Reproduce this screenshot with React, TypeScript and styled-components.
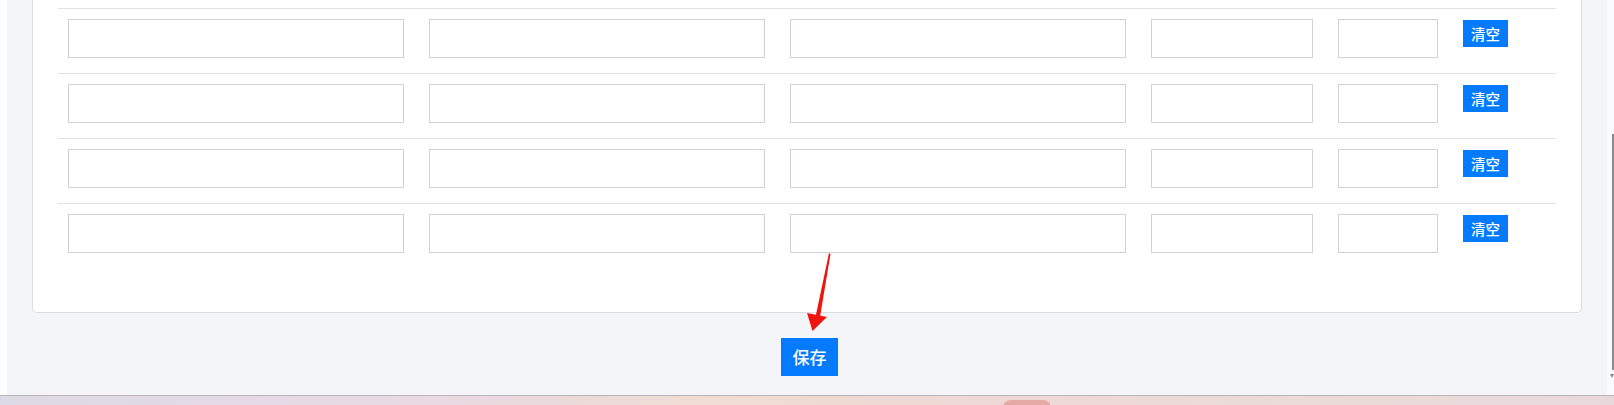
import React from "react";
import styled, { createGlobalStyle } from "styled-components";

const Global = createGlobalStyle`
  html, body { margin: 0; padding: 0; }
  body {
    width: 1614px;
    height: 405px;
    overflow: hidden;
    background: #fcfcfd;
    font-family: "Noto Sans CJK SC", "Noto Sans", sans-serif;
  }
`;

const Screen = styled.div`
  position: relative;
  width: 1614px;
  height: 405px;
  display: flex;
  flex-direction: column;
`;

const Window = styled.div`
  display: flex;
  height: 396px;
`;

const Gutter = styled.div`
  width: 7px;
  background: #fdfdfe;
`;

const Main = styled.div`
  flex: 1;
  background: #f4f5f9;
  padding: 0 25px;
  display: flex;
  flex-direction: column;
`;

const ScrollTrack = styled.div`
  width: 7px;
  background: #fbfbfc;
  display: flex;
  flex-direction: column;
  align-items: flex-end;
  padding-top: 134px;
`;

const Thumb = styled.div`
  width: 2px;
  height: 236px;
  background: #8a8a8a;
`;

const ScrollArrow = styled.div`
  width: 0;
  height: 0;
  margin-top: 4px;
  border-left: 2px solid transparent;
  border-right: 2px solid transparent;
  border-top: 4px solid #8a8a8a;
`;

const Card = styled.div`
  background: #ffffff;
  border: 1px solid #dcdde0;
  border-top: none;
  border-radius: 0 0 5px 5px;
  padding: 8px 25px 44px;
`;

const Row = styled.div`
  display: grid;
  grid-template-columns: 361px 361px 361px 187px 125px 103px;
  border-top: 1px solid #dee1e5;
  height: 64px;
`;

const Cell = styled.div`
  padding: 10px 0 0 10px;
`;

const Field = styled.input<{ $w: number }>`
  display: block;
  box-sizing: border-box;
  width: ${(p) => p.$w}px;
  height: 39px;
  border: 1px solid #cfd3d9;
  border-radius: 0;
  background: #fff;
  margin: 0;
  padding: 0 8px;
  outline: none;
`;

const ClearButton = styled.button`
  margin-top: 1px;
  width: 45px;
  height: 27px;
  padding: 0;
  border: none;
  border-radius: 0;
  background: #047bfd;
  color: #fff;
  font-family: "Noto Sans CJK SC", sans-serif;
  font-size: 14.5px;
  font-weight: 500;
  line-height: 27px;
  text-align: center;
  cursor: pointer;
`;

const Actions = styled.div`
  display: flex;
  justify-content: center;
  padding-top: 25px;
  padding-left: 5px;
`;

const SaveButton = styled.button`
  width: 57px;
  height: 38px;
  padding: 0;
  border: none;
  border-radius: 0;
  background: #047bfd;
  color: #fff;
  font-family: "Noto Sans CJK SC", sans-serif;
  font-size: 17px;
  font-weight: 500;
  line-height: 38px;
  text-align: center;
  cursor: pointer;
`;

const Desktop = styled.div`
  position: relative;
  height: 9px;
  border-top: 1px solid #b9b4b8;
  background: linear-gradient(90deg, #dcdae6 0%, #e8d9e3 25%, #efdcd2 45%, #eed8d6 62%, #ebdcd8 80%, #e8d8dc 100%);
`;

const TaskItem = styled.div`
  position: absolute;
  left: 1003px;
  top: 4px;
  width: 48px;
  height: 10px;
  border-radius: 8px 8px 0 0;
  background: #e5aaa5;
`;

const Annotation = styled.svg`
  position: absolute;
  left: 0;
  top: 0;
  pointer-events: none;
`;

const widths = [336, 336, 336, 162, 100];

export default function App() {
  const rows = [0, 1, 2, 3];
  return (
    <>
      <Global />
      <Screen>
        <Window>
          <Gutter />
          <Main>
            <Card>
              {rows.map((r) => (
                <Row key={r}>
                  {widths.map((w, i) => (
                    <Cell key={i}>
                      <Field $w={w} type="text" />
                    </Cell>
                  ))}
                  <Cell>
                    <ClearButton>清空</ClearButton>
                  </Cell>
                </Row>
              ))}
            </Card>
            <Actions>
              <SaveButton>保存</SaveButton>
            </Actions>
          </Main>
          <ScrollTrack>
            <Thumb />
            <ScrollArrow />
          </ScrollTrack>
        </Window>
        <Desktop>
          <TaskItem />
        </Desktop>
        <Annotation width="1614" height="405" viewBox="0 0 1614 405">
          <polygon points="829,253 830.5,254 820,317 815.5,317" fill="#f0140f" />
          <polygon points="807,313 827,317 812.5,331" fill="#f0140f" />
        </Annotation>
      </Screen>
    </>
  );
}
